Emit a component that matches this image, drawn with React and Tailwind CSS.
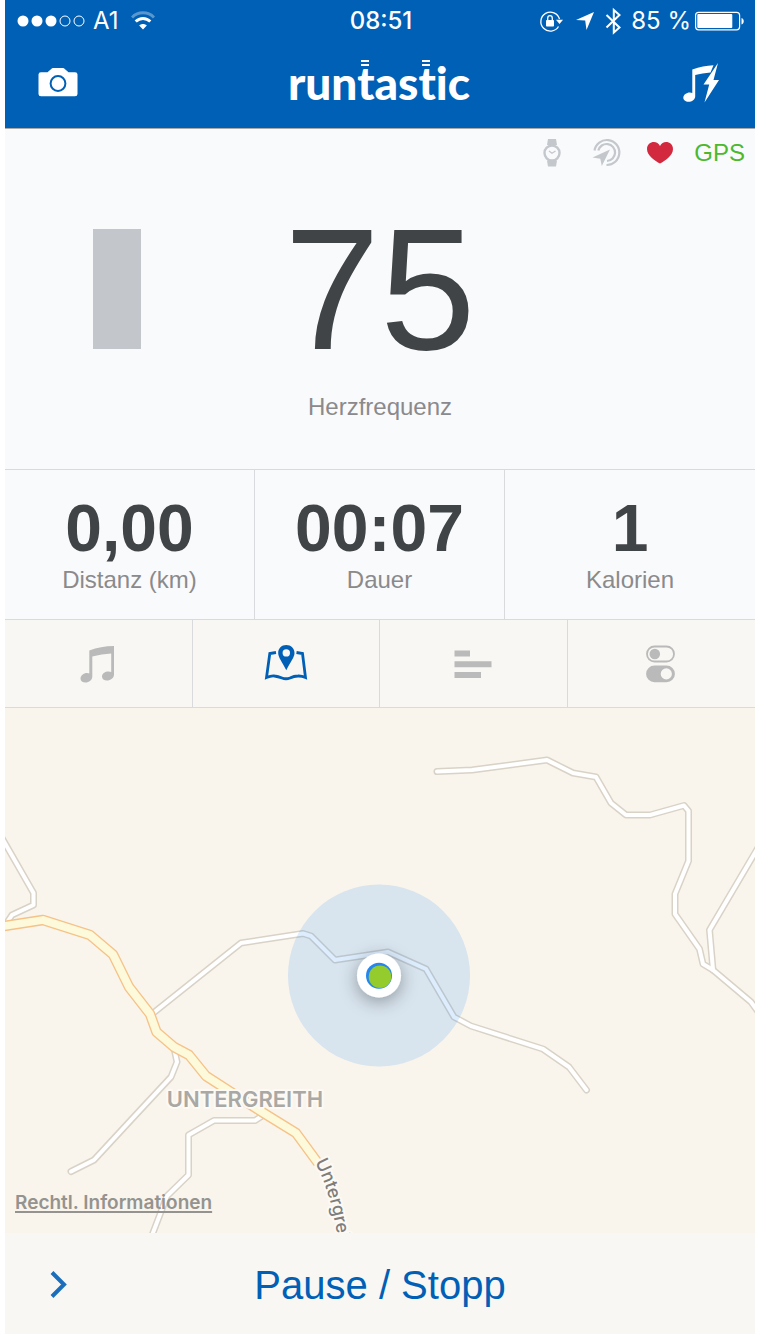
const SANS = 'font-["Liberation_Sans",Arial,sans-serif]';
const NARROW = 'font-["Liberation_Sans_Narrow","Liberation_Sans",sans-serif]';
const UI = 'font-["Inter",sans-serif]';

const stats = [
  { value: '0,00', label: 'Distanz (km)' },
  { value: '00:07', label: 'Dauer' },
  { value: '1', label: 'Kalorien' },
];

const roads = [
  'M437 771.5 L472 770 L547 760 L573 773 L596 777 L611 803 L626 815 L650 815 L684 805.5 L688.5 811 V861 L675 894 V914 L699.5 949 L703 964 L713 970 L751 1002 L759 1013',
  'M713 970 L709.5 930 L759 846',
  'M152 1014 L241 943 L303 933.5 L311 936 L335 960 L388 952 L426 969 L454 1017 L471 1026 L543 1049 L569 1067 L586.5 1090',
  'M2 838 L33.5 893 V905 L12 915 L6 924',
  'M174 1048 L177 1062 L171 1077 L131 1120 L94 1160 L71 1171.5',
  'M262 1116 L255 1120.5 H214 L188.5 1135 V1175 L167 1196 L151 1238',
];
const mainRoad =
  'M-2 927 L43 920 L90 935 L113 954.5 L129 987 L150 1014 L156.5 1032 L174 1047 L189 1055 L206 1076 L262 1112 L296 1133 L318 1163';

function StatusBar() {
  return (
    <div className={`${UI} grid h-[42px] grid-cols-[1fr_auto_1fr] items-center pr-[10px] pl-3 text-[24px] leading-7`}>
      <div className="flex items-center gap-2">
        <svg className="h-3 w-[68px]" viewBox="17.5 14.5 68 12" fill="#fff" aria-hidden="true">
          <circle cx="23.5" cy="20.5" r="5.5" />
          <circle cx="37.5" cy="20.5" r="5.5" />
          <circle cx="51.5" cy="20.5" r="5.5" />
          <circle cx="65.5" cy="20.5" r="5" fill="none" stroke="#fff" />
          <circle cx="79.5" cy="20.5" r="5" fill="none" stroke="#fff" />
        </svg>
        <span>A1</span>
        <svg className="ml-1 h-5 w-6" viewBox="0 0 24 20" fill="none" stroke="#fff" strokeWidth="3" aria-hidden="true">
          <path d="M1 6.5C7 .3 17 .3 23 6.500" opacity=".35" />
          <path d="M4.700 10.500C8.900 6.400 15.100 6.400 19.300 10.500" />
          <path d="M12 18.500L8.200 14.600C10.300 12.600 13.700 12.600 15.800 14.600Z" fill="#fff" stroke="none" />
        </svg>
      </div>
      <span className="font-medium">08:51</span>
      <div className="flex items-center justify-end gap-2">
        <svg className="h-6 w-6" viewBox="539 8 24 24" fill="none" stroke="#fff" aria-hidden="true">
          <path d="M558.500 25.500A9.500 9.500 0 1 1 559.500 18" strokeWidth="1.300" />
          <path d="M556 18.800H563L559.500 22.900Z" fill="#fff" stroke="none" />
          <rect x="546" y="19" width="8" height="6.500" rx=".8" fill="#fff" stroke="none" />
          <path d="M547.700 19.500V17.200A2.300 2.500 0 0 1 552.300 17.200V19.500" strokeWidth="1.300" />
        </svg>
        <svg className="ml-1 h-5 w-5" viewBox="574 11 20 20" fill="#fff" aria-hidden="true">
          <path d="M593 12L585.500 30L584.200 20.500L575 20Z" />
        </svg>
        <svg className="h-7 w-5" viewBox="602 6 20 28" fill="none" stroke="#fff" strokeWidth="2" aria-hidden="true">
          <path d="M605.500 14L618.500 26.500L612.800 31.500V9L618.500 14L605.500 26.500" />
        </svg>
        <div className="flex items-center gap-1">
          <span className="whitespace-nowrap">85 %</span>
          <svg className="h-5 w-[50px]" viewBox="695 10.500 50 20" fill="#fff" aria-hidden="true">
            <rect x="695.600" y="11.800" width="44" height="17.500" rx="3" fill="none" stroke="#fff" strokeWidth="1.200" />
            <rect x="697.300" y="13.500" width="35" height="14" rx="1" />
            <path d="M741.500 17.500C744.500 18 744.500 23.500 741.500 24Z" />
          </svg>
        </div>
      </div>
    </div>
  );
}

// "t" of the wordmark with the two speed bars floating over its stem
function BarredT() {
  return (
    <span className="relative">
      t
      <span className="absolute top-[5px] left-1 h-[6px] w-2 border-y-2 border-white" />
    </span>
  );
}

function Header() {
  return (
    <header className="border-b border-[#a9a9a9] bg-[#0060b6] text-white">
      <StatusBar />
      <div className="grid h-[86px] grid-cols-[1fr_auto_1fr] items-center pr-[33px] pb-1 pl-[31px]">
        <button type="button" aria-label="Kamera" className="justify-self-start">
          <svg className="h-8 w-11" viewBox="36 67 44 32" aria-hidden="true">
            <path
              d="M41 72.300H47.500L51.500 68.700Q52 68 53 68H63Q64 68 64.500 68.700L68.500 72.300H75Q77.500 72.300 77.500 74.500V94Q77.500 96.300 75 96.300H41Q38.500 96.300 38.500 94V74.500Q38.500 72.300 41 72.300Z"
              fill="#fff"
            />
            <circle cx="58" cy="83.500" r="7.400" fill="none" stroke="#0060b6" strokeWidth="2" />
          </svg>
        </button>
        <h1 className='font-["Lato",sans-serif] text-[46px] leading-[52px] font-black [font-variant-ligatures:none]'>
          run
          <BarredT />
          as
          <BarredT />
          ic
        </h1>
        <button type="button" aria-label="Powersong" className="justify-self-end">
          <svg className="h-11 w-10" viewBox="682 61 40 44" fill="#fff" aria-hidden="true">
            <path d="M692.300 69.500C700 66.500 706 65.500 713.500 65.200L710.500 72.500C705 73 700 73.700 695.200 75V96.500C695.200 99.500 692 101.800 688.500 101.800C685.500 101.800 683.300 100 683.300 97.800C683.300 94.800 686.500 92.500 689.800 92.500Q691.300 92.500 692.300 93Z" />
            <path d="M718 63L703.500 84.500H709.200L704.500 102.500L719 80H713.500Z" />
          </svg>
        </button>
      </div>
    </header>
  );
}

function SensorStatus() {
  return (
    <div className="flex items-center justify-end px-[10px] pt-2">
      <svg className="h-8 w-8" viewBox="537 136 32 32" fill="#c4c7cc" aria-hidden="true">
        <path d="M549 138H557L558 144H548ZM548 159.500H558L557 165.500H549Z" />
        <circle cx="553" cy="152" r="7.500" fill="none" stroke="#c4c7cc" strokeWidth="2.400" />
        <path d="M550 150L553 152.200L556.500 150" fill="none" stroke="#c4c7cc" strokeWidth="1.300" />
      </svg>
      <svg className="ml-[22px] h-8 w-8" viewBox="591 136 32 32" fill="none" stroke="#c4c7cc" strokeWidth="2.200" aria-hidden="true">
        <path d="M595.500 149.500A12.500 12.500 0 1 1 607.500 164" />
        <path d="M599.300 149.500A8.500 8.500 0 1 1 608 160" />
        <path d="M611 148.500L602.800 165L601.300 157.800L593.500 156.500Z" fill="#c4c7cc" stroke="none" />
      </svg>
      <svg className="ml-[22px] h-8 w-8" viewBox="645 136 32 32" fill="#d3293f" aria-hidden="true">
        <path d="M661 162.500C656 160 648 154.500 648 148C648 140.500 658 138.500 661 145C664 138.500 674 140.500 674 148C674 154.500 666 160 661 162.500Z" />
      </svg>
      <span className="ml-[18px] text-[24px] leading-8 text-[#4cb82c]">GPS</span>
    </div>
  );
}

function HeartRate() {
  return (
    <section className="bg-[#f9fafc] pb-12">
      <SensorStatus />
      <div className="mt-7 grid grid-cols-3 items-center">
        <div className="ml-[88px] h-[120px] w-12 bg-[#c3c6cb]" />
        <p className={`${NARROW} text-center text-[172px] leading-[184px] text-[#414446]`}>75</p>
      </div>
      <p className="mt-3 text-center text-[24px] leading-7 text-[#8a8a8c]">Herzfrequenz</p>
    </section>
  );
}

function Stats() {
  return (
    <section className="grid grid-cols-3 divide-x divide-[#d9dadd] border-y border-[#d9dadd] bg-[#f9fafc]">
      {stats.map((s) => (
        <div key={s.label} className="pt-5 pb-[25px] text-center">
          <p className={`${NARROW} text-[66px] leading-[76px] font-bold text-[#414446]`}>{s.value}</p>
          <p className="text-[24px] leading-7 text-[#8a8a8c]">{s.label}</p>
        </div>
      ))}
    </section>
  );
}

function TabButton({ label, active, children }) {
  return (
    <button
      type="button"
      aria-label={label}
      aria-pressed={active}
      className={`flex items-center justify-center pt-[22px] pb-[21px] ${active ? 'text-[#0060b6]' : 'text-[#bababa]'}`}
    >
      {children}
    </button>
  );
}

function Tabs() {
  return (
    <nav className="grid grid-cols-4 divide-x divide-[#d9dadd] border-b border-[#d9dadd] bg-[#f8f7f3]">
      <TabButton label="Musik">
        <svg className="h-11 w-11" viewBox="76 642 44 44" fill="currentColor" aria-hidden="true">
          <path d="M89.300 650.500C97 647.500 105 646 114 646V674.500C114 678 110.500 680.500 107 680.500C104 680.500 102 679 102 676.500C102 673.500 105 671.500 108.500 671.500Q110.200 671.500 111.200 672V653.500C105 654 98.500 654.800 92.300 656.500V676.500C92.300 680 89 682.500 85.500 682.500C82.500 682.500 80.500 681 80.500 678.500C80.500 675.500 83.500 673 87 673Q88.500 673 89.300 673.500Z" />
        </svg>
      </TabButton>
      <TabButton label="Karte" active>
        <svg className="h-11 w-11" viewBox="263 642 44 44" fill="none" stroke="currentColor" strokeWidth="2.800" aria-hidden="true">
          <path d="M275 652.500L268.800 653.500L265.500 677.500Q270.500 675.500 273.500 676Q277 676.500 281 678Q285 679.500 289 678Q293 676 297 676Q300.500 675.800 304.500 677.500L301.500 653.500L295.500 652.500" />
          <path
            d="M285.300 645C280.500 645 277.200 648.500 277.200 653C277.200 657.500 281 661.500 285.300 670.300C289.500 661.500 293.500 657.500 293.500 653C293.500 648.500 290 645 285.300 645ZM285.300 649.200A3.700 3.700 0 1 1 285.300 656.600A3.700 3.700 0 1 1 285.300 649.200Z"
            fill="currentColor"
            fillRule="evenodd"
            stroke="none"
          />
        </svg>
      </TabButton>
      <TabButton label="Statistik">
        <svg className="h-11 w-11" viewBox="452 642 44 44" fill="currentColor" aria-hidden="true">
          <path d="M455.500 650.500H471V656.500H455.500ZM455.500 661.300H492.500V667.300H455.500ZM455.500 672H482V678H455.500Z" />
        </svg>
      </TabButton>
      <TabButton label="Einstellungen">
        <svg className="h-11 w-11" viewBox="639 642 44 44" fill="currentColor" aria-hidden="true">
          <rect x="647" y="646.500" width="27" height="15" rx="7.500" fill="none" stroke="currentColor" strokeWidth="1.800" />
          <circle cx="654.800" cy="654" r="5.300" />
          <path d="M654.500 665.500H666.500A8.300 8.300 0 0 1 666.500 682.300H654.500A8.300 8.300 0 0 1 654.500 665.500ZM666.300 668.300A5.600 5.600 0 1 0 666.300 679.500A5.600 5.600 0 1 0 666.300 668.300Z" fillRule="evenodd" />
        </svg>
      </TabButton>
    </nav>
  );
}

function RouteMap() {
  return (
    <section className="relative flex min-h-[420px] flex-1 items-end overflow-hidden bg-[#f9f5ed]">
      <svg className="absolute inset-0 h-full w-full" viewBox="5 708 750 525" preserveAspectRatio="xMidYMid slice">
        <defs>
          <filter id="pinShadow" x="-100%" y="-100%" width="300%" height="300%">
            <feDropShadow dx="0" dy="4" stdDeviation="9" floodColor="#000" floodOpacity=".35" />
          </filter>
          <path id="streetLabel" d="M315 1162 C326 1184 335 1210 341 1262" />
        </defs>
        <g fill="none" strokeLinejoin="round" strokeLinecap="round">
          {roads.map((d) => (
            <path key={d} d={d} stroke="#d9d2c7" strokeWidth="7" />
          ))}
          {roads.map((d) => (
            <path key={d} d={d} stroke="#fff" strokeWidth="4" />
          ))}
          <path d={mainRoad} stroke="#f6c288" strokeWidth="10.500" strokeLinecap="butt" />
          <path d={mainRoad} stroke="#fcfadb" strokeWidth="7.800" strokeLinecap="butt" />
        </g>
        <g className={UI} stroke="#fdfaf5" strokeWidth="4" strokeLinejoin="round" paintOrder="stroke">
          <text x="245" y="1107" textAnchor="middle" fontSize="22" fontWeight="600" fill="#a9a8a4">
            UNTERGREITH
          </text>
          <text fontSize="18" fontWeight="500" fill="#7e7e7c">
            <textPath href="#streetLabel">Untergrei</textPath>
          </text>
        </g>
        <circle cx="379" cy="975.500" r="91" fill="#1d84fa" fillOpacity=".15" />
        <circle cx="379" cy="975.500" r="22" fill="#fff" filter="url(#pinShadow)" />
        <circle cx="379" cy="975.800" r="13" fill="#2486ee" />
        <circle cx="380" cy="976.800" r="11.300" fill="#93cc2c" />
      </svg>
      <a
        href="#legal"
        className={`${UI} relative mb-[18px] ml-[10px] text-[19px] leading-6 font-semibold text-[#94938f] underline decoration-2 underline-offset-2`}
      >
        Rechtl. Informationen
      </a>
    </section>
  );
}

export default function App() {
  return (
    <div className="min-h-screen bg-white pr-[6px] pl-[5px]">
      <main className={`${SANS} flex min-h-screen flex-col`}>
        <Header />
        <HeartRate />
        <Stats />
        <Tabs />
        <RouteMap />
        <footer className="grid grid-cols-[1fr_auto_1fr] items-center bg-[#f8f7f4] pt-[26px] pb-[22px] text-[#0060b6]">
          <button type="button" aria-label="Weiter" className="ml-10 justify-self-start">
            <svg className="h-8 w-7" viewBox="45 1269 28 32" fill="none" stroke="#1a6ebc" strokeWidth="4" aria-hidden="true">
              <path d="M52 1271.500L64 1283.500L52 1295.500" />
            </svg>
          </button>
          <button type="button" className="text-[40px] leading-[53px]">
            Pause / Stopp
          </button>
        </footer>
      </main>
    </div>
  );
}
